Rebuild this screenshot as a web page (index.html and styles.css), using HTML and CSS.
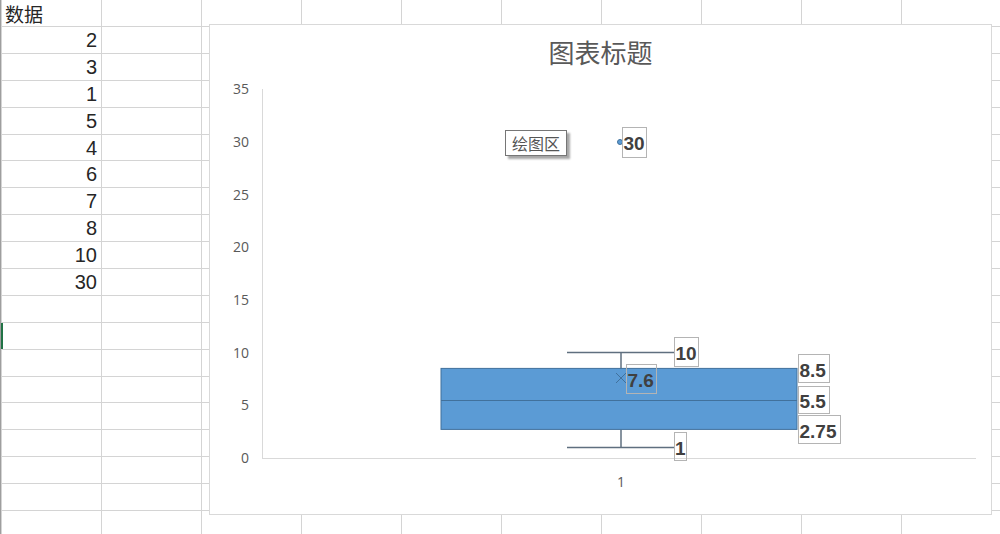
FILE: index.html
```html
<!DOCTYPE html>
<html>
<head>
    <meta charset="utf-8">
    <title>箱形图</title>
    <link rel="stylesheet" href="styles.css">
</head>
<body>

<div class="sheet">
    <div class="row row_head"><div class="cell cell_text">数据</div></div>
    <div class="row"><div class="cell">2</div></div>
    <div class="row"><div class="cell">3</div></div>
    <div class="row"><div class="cell">1</div></div>
    <div class="row"><div class="cell">5</div></div>
    <div class="row"><div class="cell">4</div></div>
    <div class="row"><div class="cell">6</div></div>
    <div class="row"><div class="cell">7</div></div>
    <div class="row"><div class="cell">8</div></div>
    <div class="row"><div class="cell">10</div></div>
    <div class="row"><div class="cell">30</div></div>
    <div class="row"></div>
    <div class="row row_active"></div>
    <div class="row"></div>
    <div class="row"></div>
    <div class="row"></div>
    <div class="row"></div>
    <div class="row"></div>
    <div class="row"></div>
    <div class="row"></div>
</div>

<!-- 图表 -->
<div class="chart">
    <div class="chart_title">图表标题</div>
    <svg class="plot" viewBox="210 75 781 439" width="781" height="439">
        <g class="axis">
            <line x1="262.5" y1="89" x2="262.5" y2="458.5"/>
            <line x1="262" y1="458.5" x2="976" y2="458.5"/>
        </g>
        <g class="tick" text-anchor="end">
            <text x="249" y="94">35</text>
            <text x="249" y="147">30</text>
            <text x="249" y="199.5">25</text>
            <text x="249" y="252">20</text>
            <text x="249" y="305">15</text>
            <text x="249" y="357.5">10</text>
            <text x="249" y="410">5</text>
            <text x="249" y="463">0</text>
        </g>
        <g class="tick" text-anchor="middle">
            <text x="621" y="487">1</text>
        </g>

        <g class="whisker">
            <line x1="621" y1="352.6" x2="621" y2="368.4"/>
            <line x1="567" y1="352.6" x2="675" y2="352.6"/>
            <line x1="621" y1="429.5" x2="621" y2="447.5"/>
            <line x1="567" y1="447.5" x2="675" y2="447.5"/>
        </g>
        <rect class="box" x="441" y="368.4" width="356" height="61"/>
        <line class="median" x1="441" y1="400.5" x2="797" y2="400.5"/>
        <g class="mean">
            <line x1="616" y1="373" x2="626" y2="383"/>
            <line x1="616" y1="383" x2="626" y2="373"/>
        </g>
        <circle class="outlier" cx="620" cy="142" r="2.5"/>

        <g class="label">
            <rect x="622.5" y="127.5" width="24" height="30"/>
            <text x="623.5" y="150">30</text>
            <rect x="674.5" y="337.5" width="24" height="29"/>
            <text x="675.5" y="360">10</text>
            <rect x="626.5" y="364.5" width="30" height="29"/>
            <text x="627.5" y="387">7.6</text>
            <rect x="798.5" y="354.5" width="31" height="28"/>
            <text x="799.5" y="377">8.5</text>
            <rect x="798.5" y="386.5" width="31" height="27"/>
            <text x="799.5" y="408">5.5</text>
            <rect x="798.5" y="415.5" width="42" height="28"/>
            <text x="799.5" y="438">2.75</text>
            <rect x="674.5" y="432.5" width="12" height="28"/>
            <text x="675" y="455">1</text>
        </g>
    </svg>
    <div class="tip">绘图区</div>
</div>

</body>
</html>
```

FILE: styles.css
```css
html, body{
    margin:0;
    padding:0;
}
body{
    position:relative;
    width:1000px;
    height:534px;
    overflow:hidden;
    background:#fff;
    font-family:"Liberation Sans", "Noto Sans CJK SC", sans-serif;
}

/* 表格 */
.sheet{
    height:534px;
    border-left:1px solid #9e9e9e;
    background-image:linear-gradient(to right, transparent 99px, #d4d4d4 99px);
    background-size:100px 100%;
    background-position:1px 0;
}
.row{
    box-sizing:border-box;
    height:26.9px;
    border-bottom:1px solid #d4d4d4;
    display:flex;
}
.row_head{
    height:27px;
}
.row_active{
    box-shadow:inset 2px 0 0 #217346;
}
.cell{
    box-sizing:border-box;
    width:100px;
    padding-right:4px;
    padding-top:1px;
    display:flex;
    align-items:center;
    justify-content:flex-end;
    font-size:20px;
    color:#262626;
}
.cell_text{
    justify-content:flex-start;
    padding:0 0 0 4px;
    font-family:"Noto Sans CJK SC", sans-serif;
    font-size:19px;
}

/* 图表 */
.chart{
    position:absolute;
    left:209px;
    top:24px;
    width:783px;
    height:491px;
    box-sizing:border-box;
    border:1px solid #d9d9d9;
    background:#fff;
}
.chart_title{
    box-sizing:border-box;
    height:50px;
    padding-top:9px;
    line-height:36px;
    text-align:center;
    font-family:"Noto Sans CJK SC", sans-serif;
    font-size:26px;
    color:#595959;
}
.plot{
    display:block;
}
.axis line{
    stroke:#d9d9d9;
    stroke-width:1;
}
.tick text{
    font-family:"Open Sans", sans-serif;
    font-size:14px;
    fill:#595959;
}
.whisker line{
    stroke:#5f6f7f;
    stroke-width:1.5;
}
.box{
    fill:#5b9bd5;
    stroke:#41719c;
    stroke-width:1;
}
.median{
    stroke:#41719c;
    stroke-width:1;
}
.mean line{
    stroke:#41719c;
    stroke-width:1;
}
.outlier{
    fill:#5b9bd5;
    stroke:#41719c;
    stroke-width:1;
}
.label rect{
    fill:none;
    stroke:#b4b4b4;
    stroke-width:1;
}
.label text{
    font-family:"Liberation Sans", sans-serif;
    font-weight:bold;
    font-size:19px;
    fill:#404040;
}

/* 提示框 */
.tip{
    position:absolute;
    left:295px;
    top:105px;
    padding:0 6px;
    height:24px;
    line-height:24px;
    border:1px solid #767676;
    background:#fff;
    box-shadow:3px 3px 2px rgba(0,0,0,0.35);
    font-family:"Noto Sans CJK SC", sans-serif;
    font-size:16px;
    color:#555;
}
```
